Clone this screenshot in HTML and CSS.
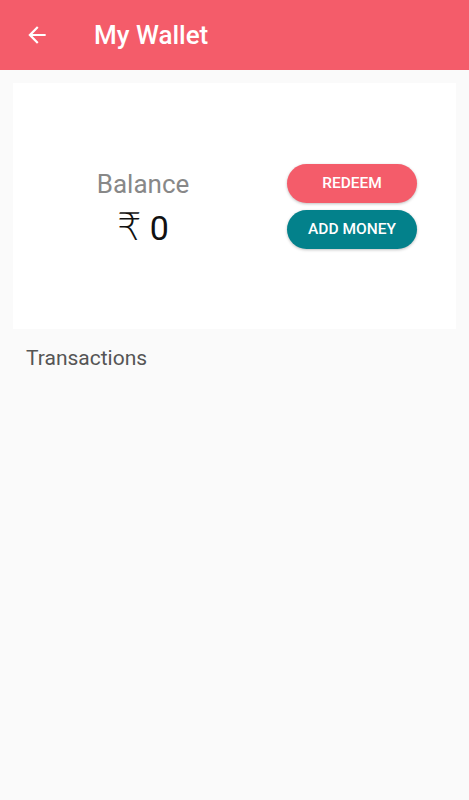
FILE: index.html
```html
<!DOCTYPE html>
<html>
<head>
<meta name="viewport" content="width=device-width, initial-scale=1">
<link rel="stylesheet" href="styles.css">
</head>
<body>

<div class="toolbar">
  <svg class="back" width="24" height="24" viewBox="0 0 24 24">
    <path d="M20 11H7.83l5.59-5.59L12 4l-8 8 8 8 1.41-1.41L7.83 13H20v-2z" fill="#fff"/>
  </svg>
  <h1 class="title">My Wallet</h1>
</div>

<div class="card">
  <div class="balance">
    <div class="balance-label">Balance</div>
    <div class="balance-amount"><span class="rupee">₹</span> 0</div>
  </div>
  <div class="actions">
    <button class="btn btn-redeem">REDEEM</button>
    <button class="btn btn-add">ADD MONEY</button>
  </div>
</div>

<div class="section-title">Transactions</div>

</body>
</html>
```
FILE: styles.css
```css
* {
  box-sizing: border-box;
}

body {
  margin: 0;
  background-color: #fafafa;
  font-family: Roboto, "Noto Sans", sans-serif;
  height: 800px;
}

.toolbar {
  height: 70px;
  background-color: #f45c6a;
  display: flex;
  align-items: center;
  padding-left: 24px;
}

.back {
  width: 26px;
  height: 26px;
}

.title {
  margin: 0 0 0 44px;
  color: #fff;
  font-size: 26px;
  font-weight: 500;
}

.card {
  margin: 13px 13px 0 13px;
  height: 246px;
  background-color: #fff;
  display: flex;
  align-items: center;
  padding-right: 39px;
}

.balance {
  flex: 1;
  text-align: center;
  margin-right: 14px;
  padding-top: 4px;
}

.balance-label {
  color: #888;
  font-size: 26px;
  line-height: 30px;
}

.balance-amount {
  color: #111;
  font-size: 34px;
  line-height: 40px;
  margin-top: 8px;
}

.rupee {
  font-family: "DejaVu Sans", sans-serif;
  font-weight: 300;
  font-size: 38px;
}

.actions {
  width: 130px;
  display: flex;
  flex-direction: column;
  gap: 7px;
}

.btn {
  height: 39px;
  border: none;
  border-radius: 20px;
  color: #fff;
  font-family: Roboto, sans-serif;
  font-size: 15.5px;
  font-weight: 500;
  box-shadow: 0 1px 3px rgba(0, 0, 0, 0.25);
}

.btn-redeem {
  background-color: #f45c6a;
}

.btn-add {
  background-color: #03818b;
}

.section-title {
  margin: 17px 0 0 26px;
  color: #555;
  font-size: 21px;
}
```
